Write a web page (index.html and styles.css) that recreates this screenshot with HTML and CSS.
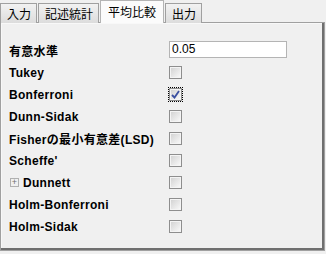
FILE: index.html
```html
<!DOCTYPE html>
<html lang="ja">
  <head>
    <meta charset="UTF-8" />
    <title>平均比較</title>
    <link rel="stylesheet" href="styles.css">
  </head>
  <body>
    <div class="tabs">
      <div class="tab">入力</div>
      <div class="tab">記述統計</div>
      <div class="tab active">平均比較</div>
      <div class="tab">出力</div>
    </div>

    <div class="panel">
      <div class="row">
        <label>有意水準</label>
        <input type="text" class="num" value="0.05" />
      </div>
      <div class="row">
        <label>Tukey</label>
        <span class="check"></span>
      </div>
      <div class="row">
        <label>Bonferroni</label>
        <span class="focus"><span class="check checked">
          <svg width="9" height="9" viewBox="0 0 9 9"><path d="M1 5 L3.5 7.5 L8 1" fill="none" stroke="#3a4fa0" stroke-width="1.8"/></svg>
        </span></span>
      </div>
      <div class="row">
        <label>Dunn-Sidak</label>
        <span class="check"></span>
      </div>
      <div class="row">
        <label>Fisherの最小有意差(LSD)</label>
        <span class="check"></span>
      </div>
      <div class="row">
        <label>Scheffe'</label>
        <span class="check"></span>
      </div>
      <div class="row">
        <label><span class="plus">+</span>Dunnett</label>
        <span class="check"></span>
      </div>
      <div class="row">
        <label>Holm-Bonferroni</label>
        <span class="check"></span>
      </div>
      <div class="row">
        <label>Holm-Sidak</label>
        <span class="check"></span>
      </div>
    </div>
  </body>
</html>
```

FILE: styles.css
```css
body {
  margin: 0;
  background: #f0f0f0;
  font-family: "Liberation Sans", "Noto Sans CJK JP", sans-serif;
  font-size: 12px;
  color: #000;
  width: 326px;
  height: 254px;
  overflow: hidden;
}
.tabs {
  display: flex;
  height: 23px;
  align-items: flex-end;
}
.tab {
  height: 20px;
  line-height: 20px;
  padding: 0 5px 0 6px;
  margin-right: 1px;
  border: 1px solid #a0a0a0;
  border-bottom: none;
  background: linear-gradient(#f2f2f2, #dcdcdc);
  box-sizing: border-box;
  font-family: "Noto Sans CJK JP", sans-serif;
}
.tab.active {
  height: 23px;
  line-height: 22px;
  background: #fbfbfb;
  border-color: #b4b4b4;
  padding: 0 7px;
  margin: 0 1px 0 0;
}
.panel {
  height: 229px;
  margin-right: 1px;
  border: 1px solid #a0a0a0;
  box-shadow: inset -2px -2px 0 #6f6f6f, inset 1px 1px 0 #f8f8f8;
  box-sizing: border-box;
  padding: 16px 0 0 8px;
  margin-top: -1px;
}
.row {
  display: grid;
  grid-template-columns: 160px auto;
  align-items: center;
  height: 22px;
}
.row label {
  font-weight: bold;
  letter-spacing: 0.3px;
  display: flex;
  align-items: center;
  padding-top: 1px;
}
.num {
  width: 118px;
  height: 17px;
  box-sizing: border-box;
  border: 1px solid #b4b4b4;
  background: #fff;
  padding: 0 2px;
  font-family: "Liberation Sans", sans-serif;
  font-size: 12px;
  margin: 0 0 2px;
  outline: none;
}
.check {
  display: block;
  width: 13px;
  height: 13px;
  box-sizing: border-box;
  border: 1px solid #8e8e8e;
  background: linear-gradient(135deg, #d0d0d0, #fbfbfb);
  box-shadow: inset 0 0 0 1px #f4f4f4;
}
.check.checked {
  display: flex;
  align-items: center;
  justify-content: center;
}
.focus {
  display: block;
  width: 15px;
  height: 15px;
  margin-left: -1px;
  box-sizing: border-box;
  border: 1px dotted #000;
}
.plus {
  display: inline-block;
  width: 9px;
  height: 9px;
  box-sizing: border-box;
  border: 1px solid #b0b0b0;
  font-size: 9px;
  line-height: 6px;
  text-align: center;
  font-weight: normal;
  color: #707070;
  margin: 0 4px 0 1px;
}
```
